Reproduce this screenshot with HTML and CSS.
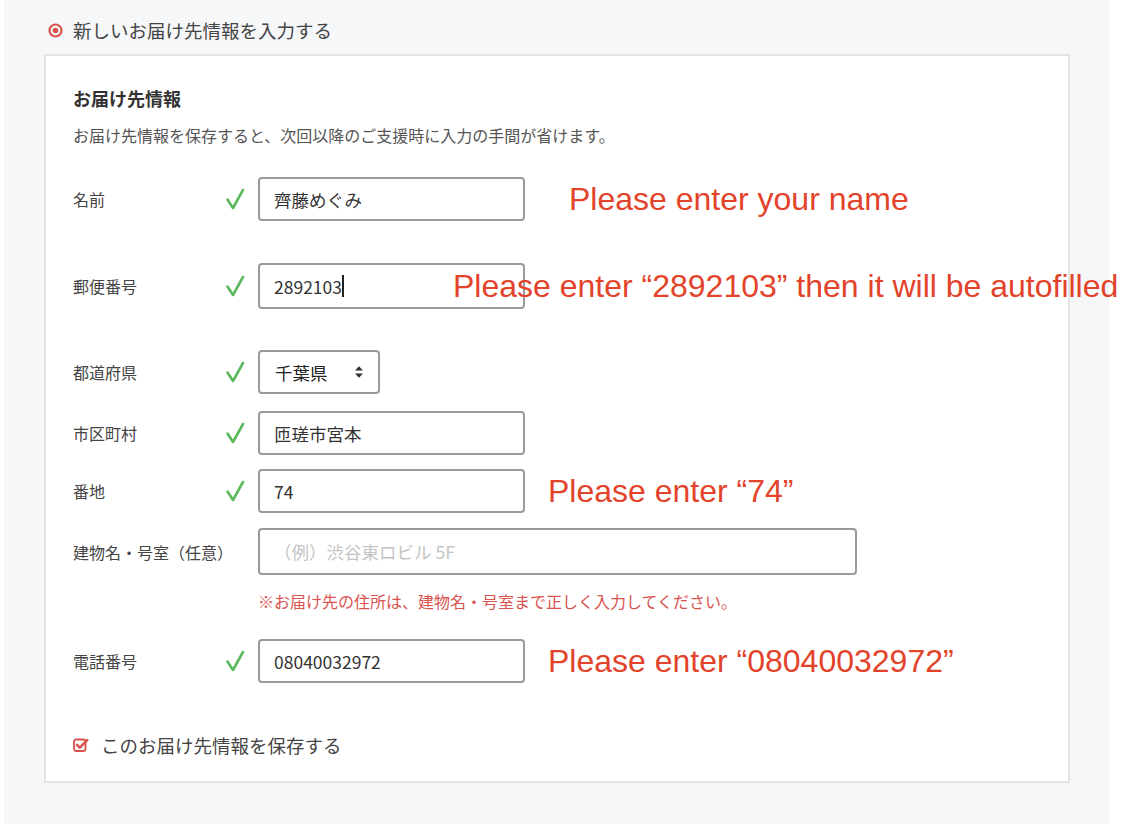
FILE: index.html
```html
<!DOCTYPE html>
<html lang="ja">
<head>
<meta charset="utf-8">
<title>お届け先情報</title>
<link rel="stylesheet" href="styles.css">
</head>
<body>
<div class="page">
  <div class="choice">
    <svg class="radio" width="15" height="15" viewBox="0 0 15 15"><circle cx="7.5" cy="7.5" r="6" fill="none" stroke="#d9534f" stroke-width="2.2"/><circle cx="7.5" cy="7.5" r="2.8" fill="#d9534f"/></svg>
    <span>新しいお届け先情報を入力する</span>
  </div>
  <div class="card">
    <h2 class="card-title">お届け先情報</h2>
    <p class="card-desc">お届け先情報を保存すると、次回以降のご支援時に入力の手間が省けます。</p>

    <div class="row r-name">
      <div class="label">名前</div>
      <div class="ok"><svg width="20" height="22" viewBox="0 0 20 22"><path d="M2.5 11.5 L8 20 L18 2" fill="none" stroke="#5cb85c" stroke-width="2.6" stroke-linecap="round" stroke-linejoin="round"/></svg></div>
      <div class="input">齊藤めぐみ</div>
      <div class="note-ann ann-name">Please enter your name</div>
    </div>

    <div class="row r-zip">
      <div class="label">郵便番号</div>
      <div class="ok"><svg width="20" height="22" viewBox="0 0 20 22"><path d="M2.5 11.5 L8 20 L18 2" fill="none" stroke="#5cb85c" stroke-width="2.6" stroke-linecap="round" stroke-linejoin="round"/></svg></div>
      <div class="input">2892103<span class="caret"></span></div>
      <div class="note-ann ann-zip">Please enter “2892103” then it will be autofilled</div>
    </div>

    <div class="row r-pref">
      <div class="label">都道府県</div>
      <div class="ok"><svg width="20" height="22" viewBox="0 0 20 22"><path d="M2.5 11.5 L8 20 L18 2" fill="none" stroke="#5cb85c" stroke-width="2.6" stroke-linecap="round" stroke-linejoin="round"/></svg></div>
      <div class="select">
        <span>千葉県</span>
        <svg class="sort" width="10" height="14" viewBox="0 0 10 14"><path d="M1 5.6 L5 1.2 L9 5.6 Z" fill="#333"/><path d="M1 8.4 L5 12.8 L9 8.4 Z" fill="#333"/></svg>
      </div>
    </div>

    <div class="row r-city">
      <div class="label">市区町村</div>
      <div class="ok"><svg width="20" height="22" viewBox="0 0 20 22"><path d="M2.5 11.5 L8 20 L18 2" fill="none" stroke="#5cb85c" stroke-width="2.6" stroke-linecap="round" stroke-linejoin="round"/></svg></div>
      <div class="input">匝瑳市宮本</div>
    </div>

    <div class="row r-addr">
      <div class="label">番地</div>
      <div class="ok"><svg width="20" height="22" viewBox="0 0 20 22"><path d="M2.5 11.5 L8 20 L18 2" fill="none" stroke="#5cb85c" stroke-width="2.6" stroke-linecap="round" stroke-linejoin="round"/></svg></div>
      <div class="input">74</div>
      <div class="note-ann ann-addr">Please enter “74”</div>
    </div>

    <div class="row r-bldg">
      <div class="label">建物名・号室（任意）</div>
      <div class="ok"></div>
      <div class="input wide placeholder">（例）渋谷東ロビル 5F</div>
    </div>
    <p class="warn">※お届け先の住所は、建物名・号室まで正しく入力してください。</p>

    <div class="row r-tel">
      <div class="label">電話番号</div>
      <div class="ok"><svg width="20" height="22" viewBox="0 0 20 22"><path d="M2.5 11.5 L8 20 L18 2" fill="none" stroke="#5cb85c" stroke-width="2.6" stroke-linecap="round" stroke-linejoin="round"/></svg></div>
      <div class="input">08040032972</div>
      <div class="note-ann ann-tel">Please enter “08040032972”</div>
    </div>

    <div class="save">
      <svg class="cbox" width="16" height="16" viewBox="0 0 16 16"><rect x="1" y="2.5" width="11.5" height="11.5" rx="2" fill="none" stroke="#d9534f" stroke-width="1.8"/><path d="M4 7.8 L6.8 10.6 L14.2 3.2" fill="none" stroke="#d9534f" stroke-width="2.6" stroke-linecap="round" stroke-linejoin="round"/></svg>
      <span>このお届け先情報を保存する</span>
    </div>
  </div>
</div>
</body>
</html>
```

FILE: styles.css
```css
* { box-sizing: border-box; }
html, body { margin: 0; padding: 0; background: #fff; }
body {
  font-family: "Noto Sans CJK JP", "Noto Sans", sans-serif;
  color: #444;
}
.page {
  position: relative;
  margin-left: 4px;
  width: 1105px;
  height: 824px;
  background: #f6f7f9;
  padding-top: 18px;
}
.choice {
  display: flex;
  align-items: center;
  height: 24px;
  padding-left: 44px;
  font-size: 18.5px;
  line-height: 24px;
  color: #444;
}
.radio { margin-right: 10px; }
.card {
  margin: 12px 0 0 40px;
  width: 1026px;
  background: #fff;
  border: 2px solid #e3e4e6;
  padding: 30px 27px 24px 27px;
}
.card-title {
  margin: 0;
  font-size: 18px;
  line-height: 24px;
  font-weight: bold;
  color: #333;
}
.card-desc {
  margin: 15px 0 0;
  font-size: 16px;
  line-height: 20px;
  color: #555;
}
.row {
  position: relative;
  display: grid;
  grid-template-columns: 152px 33px auto;
  align-items: center;
  justify-content: start;
}
.label {
  font-size: 16px;
  color: #444;
  line-height: 20px;
  white-space: nowrap;
}
.ok { display: flex; align-items: center; height: 22px; }
.input {
  width: 267px;
  height: 44px;
  border: 2px solid #9a9a9a;
  border-radius: 4px;
  padding-left: 14px;
  display: flex;
  align-items: center;
  font-size: 17.5px;
  color: #333;
  background: #fff;
}
.input.wide { width: 599px; height: 47px; }
.input.placeholder { color: #c4c4c4; }
.caret {
  display: inline-block;
  width: 2px;
  height: 22px;
  background: #222;
}
.select {
  width: 122px;
  height: 44px;
  border: 2px solid #9a9a9a;
  border-radius: 4px;
  padding: 0 14px 0 15px;
  display: flex;
  align-items: center;
  justify-content: space-between;
  font-size: 17.5px;
  color: #222;
  background: #fff;
}
.r-name { margin-top: 32px; }
.r-zip { margin-top: 42px; }
.r-zip .input { height: 46px; }
.r-pref { margin-top: 41px; }
.r-city { margin-top: 17px; }
.r-addr { margin-top: 14px; }
.r-bldg { margin-top: 15px; }
.warn {
  margin: 16px 0 0 185px;
  font-size: 16px;
  line-height: 20px;
  color: #d9534f;
}
.r-tel { margin-top: 28px; }
.save {
  margin-top: 50px;
  display: flex;
  align-items: center;
  height: 24px;
  font-size: 18.5px;
  color: #444;
}
.cbox { margin-right: 12px; }
.note-ann {
  position: absolute;
  top: 50%;
  transform: translateY(-50%);
  font-family: "Liberation Sans", Arial, sans-serif;
  font-size: 32px;
  line-height: 1;
  color: #e2432a;
  white-space: nowrap;
}
.ann-name { left: 496px; }
.ann-zip { left: 380px; }
.ann-addr { left: 475px; }
.ann-tel { left: 475px; }
```
